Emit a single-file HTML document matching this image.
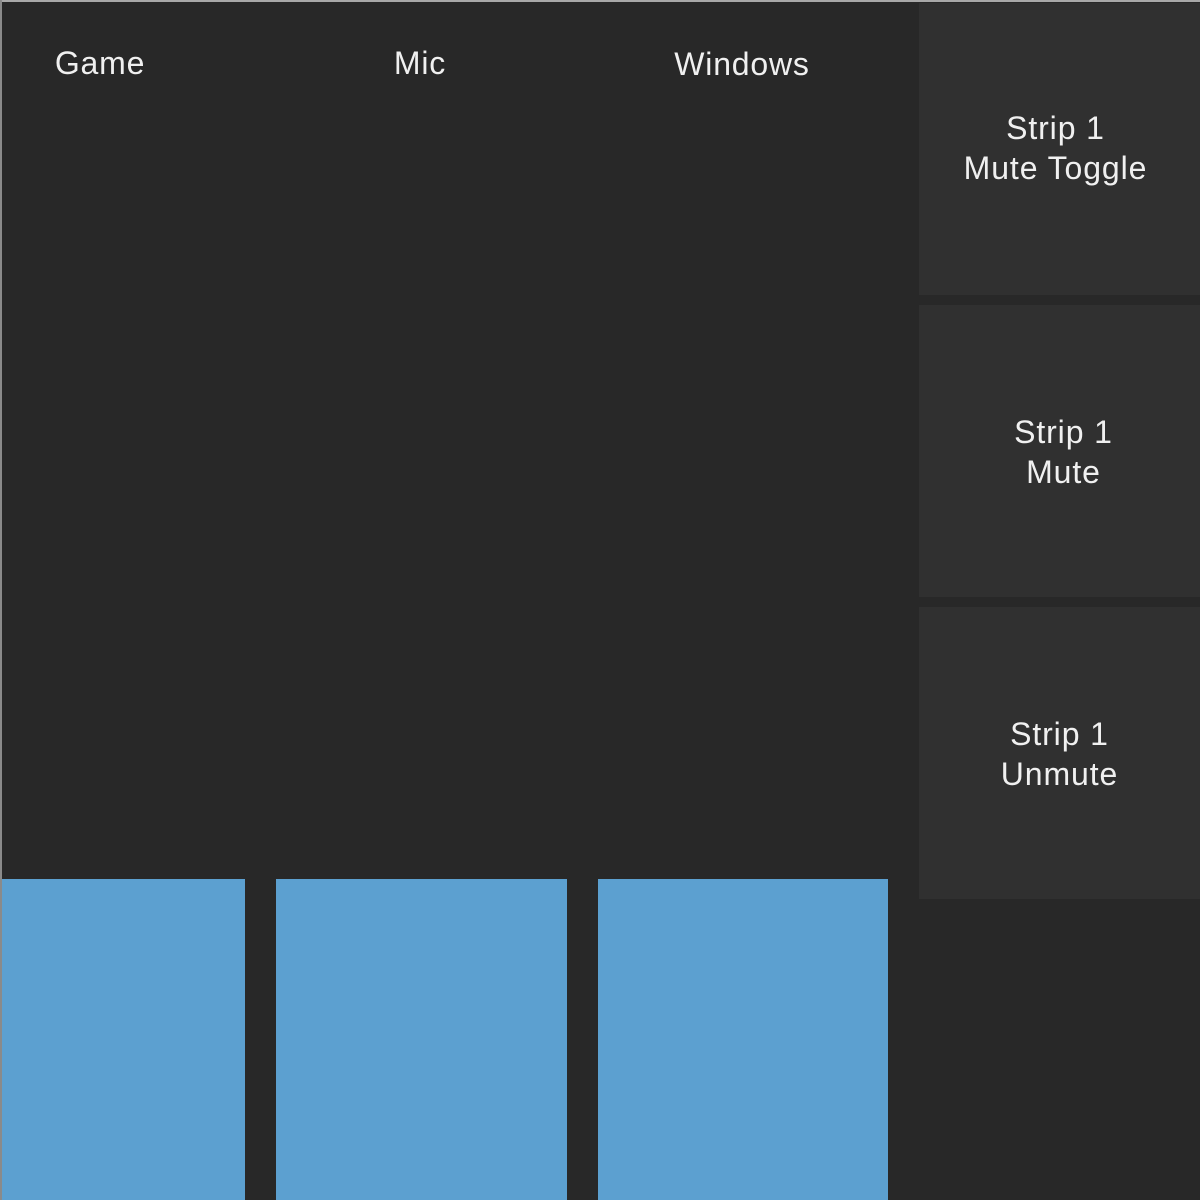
<!DOCTYPE html><html><head><style>
body{margin:0;width:1200px;height:1200px;background:#282828;position:relative;overflow:hidden;font-family:"Liberation Sans",sans-serif;color:#f0f0f0}
div{position:absolute}
.t{font-size:32px;letter-spacing:0.8px;text-align:center;width:300px;top:45px}
.b{left:919px;width:281px;height:292px;background:#303030;font-size:32px;letter-spacing:0.9px;line-height:40px;text-align:center}
.b span{position:absolute;left:0;right:0;top:105px}
.u{background:#5ca0d0;top:879px;height:321px}
</style></head><body>
<div style="left:0;top:0;width:1200px;height:2px;background:#a8a8a8"></div>
<div style="left:0;top:0;width:2px;height:1200px;background:#8a8a8a"></div>
<div class="t" style="left:-50px">Game</div>
<div class="t" style="left:270px">Mic</div>
<div class="t" style="left:592px;top:46px">Windows</div>
<div class="b" style="top:3px"><span style="top:105px;left:-8px">Strip 1<br>Mute Toggle</span></div>
<div class="b" style="top:305px"><span style="top:107px;left:8px">Strip 1<br>Mute</span></div>
<div class="b" style="top:607px"><span style="top:107px">Strip 1<br>Unmute</span></div>
<div class="u" style="left:2px;width:243px"></div>
<div class="u" style="left:276px;width:291px"></div>
<div class="u" style="left:598px;width:290px"></div>
</body></html>
